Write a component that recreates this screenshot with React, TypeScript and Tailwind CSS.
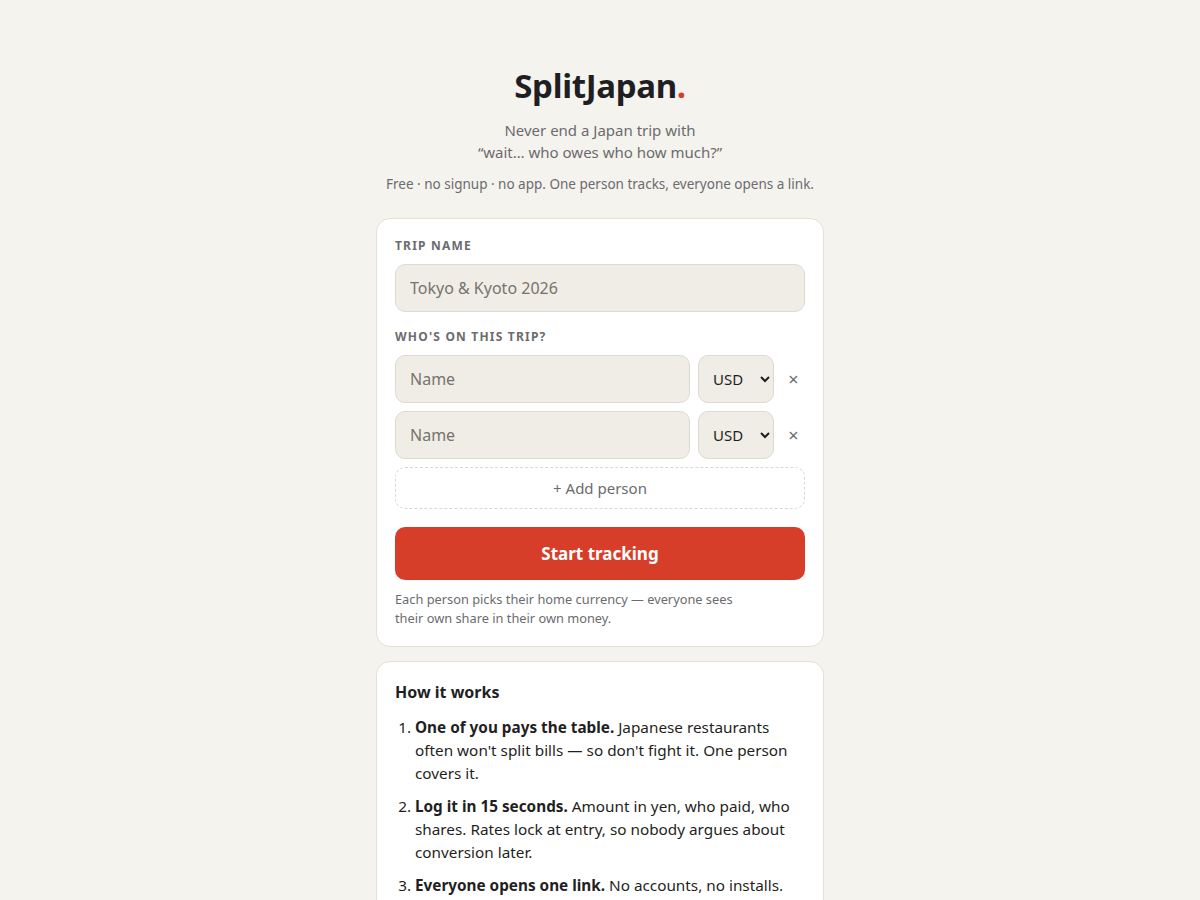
import { useState } from 'react';

// Landing form for a trip cost splitter: trip name, people, start button.
const font = { fontFamily: '"Noto Sans", "Open Sans", sans-serif' };

const steps = [
  {
    lead: 'One of you pays the table.',
    body: " Japanese restaurants often won't split bills — so don't fight it. One person covers it.",
  },
  {
    lead: 'Log it in 15 seconds.',
    body: ' Amount in yen, who paid, who shares. Rates lock at entry, so nobody argues about conversion later.',
  },
  {
    lead: 'Everyone opens one link.',
    body: ' No accounts, no installs.',
  },
];

export default function App() {
  const [people, setPeople] = useState([
    { name: '', cur: 'USD' },
    { name: '', cur: 'USD' },
  ]);

  return (
    <div className="min-h-screen bg-[#f5f3ee] text-[#1f1f23]" style={font}>
      <div className="mx-auto w-[448px] pt-[63px] pb-16">
        {/* header */}
        <h1 className="text-center text-[33px] font-bold leading-[46px] tracking-[-0.01em]">
          SplitJapan<span className="text-[#d63e2a]">.</span>
        </h1>
        <p className="mt-[10px] text-center text-[15px] leading-[22px] text-[#6b6b6e]">
          Never end a Japan trip with
          <br />
          “wait… who owes who how much?”
        </p>
        <p className="mt-[11px] text-center text-[13.5px] leading-[20px] text-[#6b6b6e]">
          Free · no signup · no app. One person tracks, everyone opens a link.
        </p>

        {/* trip form */}
        <div className="mt-[24px] rounded-[14px] border border-[#e4e0d6] bg-white px-[18px] pt-[19px] pb-[18px]">
          <label className="block text-[12px] font-bold uppercase leading-[16px] tracking-[0.1em] text-[#6b6b70]">
            Trip name
          </label>
          <input
            placeholder="Tokyo & Kyoto 2026"
            className="mt-[10px] h-[48px] w-full rounded-[10px] border border-[#dedad0] bg-[#f0ede6] px-[14px] text-[16px] text-[#1f1f23] outline-none placeholder:text-[#77736d]"
          />

          <label className="mt-[17px] block text-[12px] font-bold uppercase leading-[16px] tracking-[0.1em] text-[#6b6b70]">
            Who's on this trip?
          </label>
          <div className="mt-[10px] flex flex-col gap-[8px]">
            {people.map((p, i) => (
              <div key={i} className="flex items-center gap-[8px]">
                <input
                  placeholder="Name"
                  value={p.name}
                  onChange={(e) =>
                    setPeople(people.map((q, j) => (j === i ? { ...q, name: e.target.value } : q)))
                  }
                  className="h-[48px] min-w-0 flex-1 rounded-[10px] border border-[#dedad0] bg-[#f0ede6] px-[14px] text-[16px] text-[#1f1f23] outline-none placeholder:text-[#77736d]"
                />
                <select
                  value={p.cur}
                  onChange={(e) =>
                    setPeople(people.map((q, j) => (j === i ? { ...q, cur: e.target.value } : q)))
                  }
                  className="h-[48px] w-[76px] rounded-[10px] border border-[#dedad0] bg-[#f0ede6] pl-[10px] pr-[4px] text-[15px] text-[#1f1f23] outline-none"
                >
                  <option>USD</option>
                  <option>EUR</option>
                  <option>GBP</option>
                  <option>AUD</option>
                  <option>JPY</option>
                </select>
                <button
                  onClick={() => setPeople(people.filter((_, j) => j !== i))}
                  className="w-[23px] text-center text-[18px] leading-none text-[#6b6b6e]"
                  aria-label="Remove"
                >
                  ×
                </button>
              </div>
            ))}
            <button
              onClick={() => setPeople([...people, { name: '', cur: 'USD' }])}
              className="h-[42px] w-full rounded-[10px] border border-dashed border-[#dcd8cf] bg-white text-[15px] text-[#6b6b6e]"
            >
              + Add person
            </button>
          </div>

          <button className="mt-[18px] h-[53px] w-full rounded-[10px] bg-[#d63e2a] text-[17px] font-bold text-white">
            Start tracking
          </button>
          <p className="mt-[10px] max-w-[345px] text-[12.8px] leading-[19px] text-[#6b6b6e]">
            Each person picks their home currency — everyone sees their own share in their own money.
          </p>
        </div>

        {/* how it works */}
        <div className="mt-[14px] rounded-[14px] border border-[#e4e0d6] bg-white p-[18px]">
          <h2 className="text-[16px] font-bold leading-[24px]">How it works</h2>
          <ol className="mt-[12px] list-decimal pl-[20px] text-[15.3px] leading-[23px] text-[#1f1f23]">
            {steps.map((s) => (
              <li key={s.lead} className="mb-[10px]">
                <strong className="font-bold">{s.lead}</strong>
                {s.body}
              </li>
            ))}
          </ol>
        </div>
      </div>
    </div>
  );
}
